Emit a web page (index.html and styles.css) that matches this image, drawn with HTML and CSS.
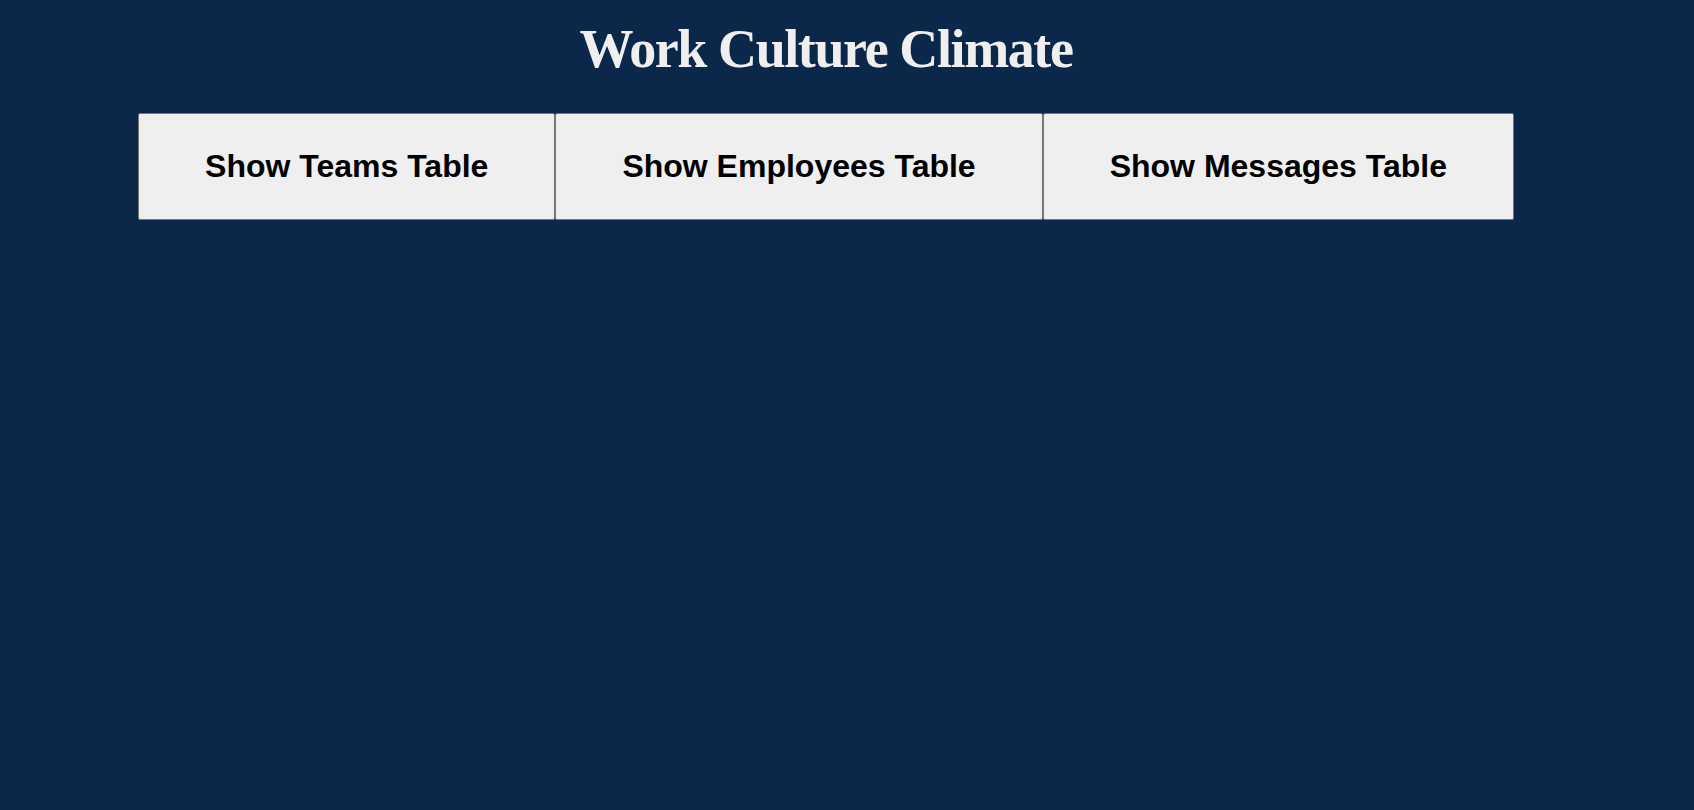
FILE: index.html
```html
<!DOCTYPE html>
<html lang="en">
<head>
<meta charset="utf-8">
<title>Work Culture Climate</title>
<link rel="stylesheet" href="styles.css">
</head>
<body>
<div class="page">
  <h1 class="title">Work Culture Climate</h1>
  <div class="tabs">
    <button class="tab" type="button">Show Teams Table</button>
    <button class="tab" type="button">Show Employees Table</button>
    <button class="tab" type="button">Show Messages Table</button>
  </div>
</div>
</body>
</html>
```

FILE: styles.css
```css
html, body {
  margin: 0;
  padding: 0;
  background: #0b284b;
  height: 100%;
}

.page {
  width: 1652px;
  padding-top: 19px;
}

.title {
  margin: 0 0 34px;
  text-align: center;
  font-family: "Liberation Serif", "Times New Roman", serif;
  font-weight: bold;
  font-size: 54px;
  line-height: 60px;
  letter-spacing: -1.4px;
  color: #efefef;
}

.tabs {
  display: flex;
  justify-content: center;
}

.tab {
  margin: 0;
  padding: 34px 66px;
  font-family: "Liberation Sans", Arial, sans-serif;
  font-weight: bold;
  font-size: 32px;
  color: #000;
  background: #efefef;
  border: 1px solid #767676;
  border-radius: 2px;
}
```
